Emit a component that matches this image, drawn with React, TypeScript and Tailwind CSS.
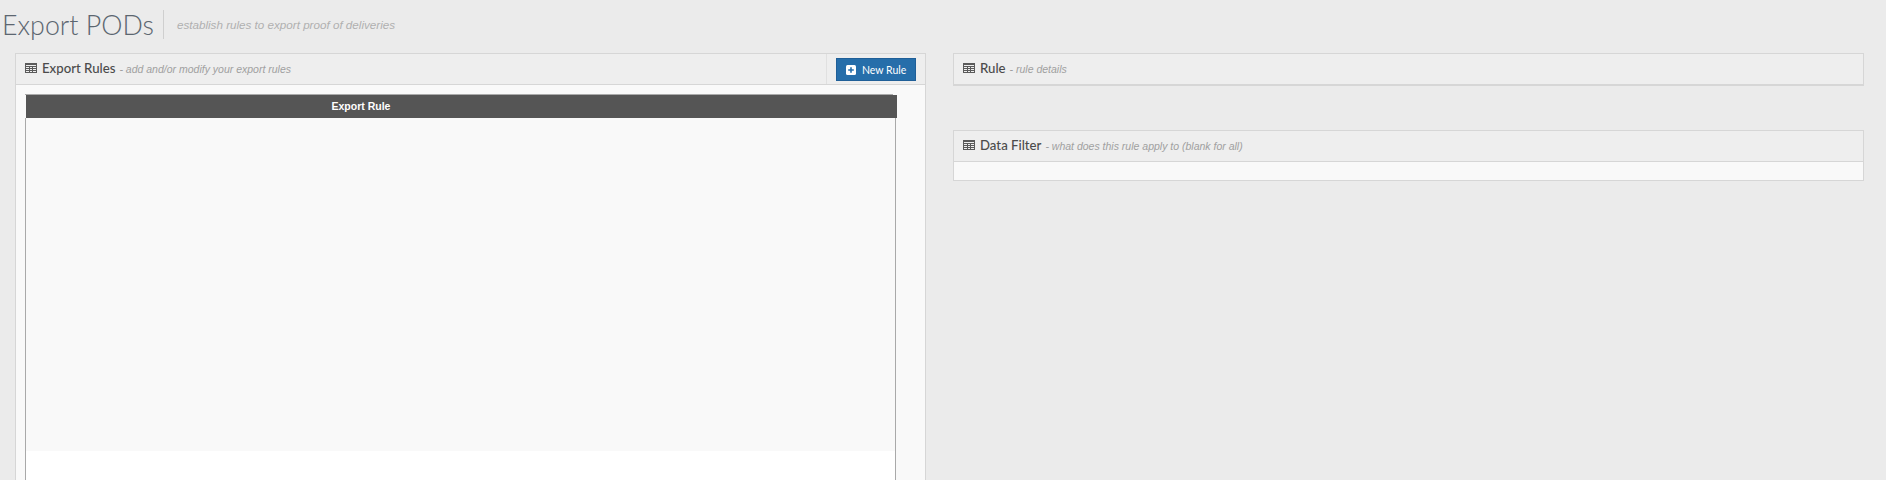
function TableIcon() {
  return (
    <svg width="12" height="10" viewBox="0 0 12 10" className="mr-[5px] shrink-0 text-[#5a5a5a]">
      <rect x="0.5" y="0.5" width="11" height="9" fill="none" stroke="currentColor" />
      <path d="M0 1.5H12M0 3.5H12M0 5.5H12M0 7.5H12M4.5 3V10M7.5 3V10" stroke="currentColor" strokeWidth="1" fill="none" />
    </svg>
  );
}

function PanelTitle({ title, sub }: { title: string; sub: string }) {
  return (
    <div className="flex items-center">
      <TableIcon />
      <span className="font-['Lato',sans-serif] text-[13.2px] font-medium leading-[16px] text-[#4b4b4b]">{title}</span>
      <span className="ml-[4px] mt-[2px] font-['Liberation_Sans',sans-serif] text-[10.5px] italic leading-[14px] text-[#a0a0a0]">- {sub}</span>
    </div>
  );
}

export default function App() {
  return (
    <div className="h-[480px] overflow-hidden bg-[#ebebeb]">
      <div className="flex h-[53px] items-start pl-[2px] pt-[10px]">
        <h1 className="mt-[1px] font-['Lato',sans-serif] text-[26.8px] font-light leading-[28px] text-[#5c6670]">Export PODs</h1>
        <div className="ml-[9px] h-[29px] w-px bg-[#cfcfcf]" />
        <span className="ml-[13px] mt-[7px] font-['Liberation_Sans',sans-serif] text-[11.65px] italic leading-[15px] text-[#b0b0b0]">
          establish rules to export proof of deliveries
        </span>
      </div>
      <div className="flex gap-[27px] pl-[15px]">
        <section className="h-[427px] w-[911px] shrink-0 border-x border-t border-[#d6d6d6] bg-[#f9f9f9]">
          <div className="flex h-[31px] items-stretch border-b border-[#d6d6d6] bg-[#eeeeee]">
            <div className="flex flex-1 items-center pb-[2px] pl-[9px]">
              <PanelTitle title="Export Rules" sub="add and/or modify your export rules" />
            </div>
            <div className="flex w-[99px] items-start border-l border-[#e0e0e0] pl-[9px] pt-[4px]">
              <button className="flex h-[23px] w-[80px] items-center border border-[#1f5f98] bg-[#266eaa] pl-[9px] font-['Lato',sans-serif] text-[10.5px] leading-[14px] text-white">
                <svg width="10" height="10" viewBox="0 0 10 10" className="mr-[6px]">
                  <rect width="10" height="10" rx="1.5" fill="#fff" />
                  <path d="M5 2.2V7.8M2.2 5H7.8" stroke="#266eaa" strokeWidth="1.6" />
                </svg>
                New Rule
              </button>
            </div>
          </div>
          <div className="ml-[9px] mt-[9px] flex h-[400px] w-[871px] flex-col">
            <div className="mr-[3px] h-px shrink-0 bg-[#aaaaaa]" />
            <div className="ml-[1px] flex h-[23px] w-[871px] shrink-0 items-center justify-center bg-[#555555] pr-[201px] font-['Liberation_Sans',sans-serif] text-[10.5px] font-bold text-white">
              Export Rule
            </div>
            <div className="flex-1 border-x border-[#a9a9a9] bg-white">
              <div className="h-[333px] bg-[#f9f9f9]" />
            </div>
          </div>
        </section>
        <div className="w-[911px] shrink-0">
          <section className="flex h-[33px] items-center border-x border-t border-b-2 border-[#d6d6d6] bg-[#eeeeee] pb-[2px] pl-[9px]">
            <PanelTitle title="Rule" sub="rule details" />
          </section>
          <section className="mt-[44px] border border-[#d6d6d6] bg-[#f9f9f9]">
            <div className="flex h-[31px] items-center border-b border-[#d6d6d6] bg-[#eeeeee] pb-[3px] pl-[9px]">
              <PanelTitle title="Data Filter" sub="what does this rule apply to (blank for all)" />
            </div>
            <div className="h-[18px]" />
          </section>
        </div>
      </div>
    </div>
  );
}
